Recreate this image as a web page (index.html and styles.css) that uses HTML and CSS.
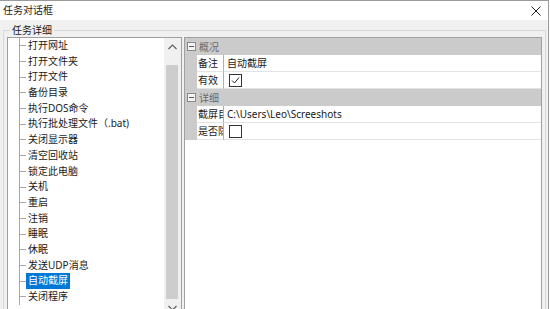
FILE: index.html
```html
<!DOCTYPE html>
<html lang="zh-CN">
<head>
  <meta charset="UTF-8">
  <title>任务对话框</title>
  <link rel="stylesheet" href="styles.css">
</head>
<body>
  <div class="window">
    <header class="titlebar">
      <span class="title">任务对话框</span>
      <svg class="close" width="10" height="10" viewBox="0 0 10 10">
        <path d="M0.5 0.5 L9.5 9.5 M9.5 0.5 L0.5 9.5" stroke="#222" stroke-width="1" fill="none"/>
      </svg>
    </header>

    <div class="client">
      <fieldset class="group">
        <legend>任务详细</legend>
        <div class="panes">
          <!-- Task type tree -->
          <div class="tree">
            <ul class="tree-list">
              <li><span>打开网址</span></li>
              <li><span>打开文件夹</span></li>
              <li><span>打开文件</span></li>
              <li><span>备份目录</span></li>
              <li><span>执行DOS命令</span></li>
              <li><span>执行批处理文件（.bat)</span></li>
              <li><span>关闭显示器</span></li>
              <li><span>清空回收站</span></li>
              <li><span>锁定此电脑</span></li>
              <li><span>关机</span></li>
              <li><span>重启</span></li>
              <li><span>注销</span></li>
              <li><span>睡眠</span></li>
              <li><span>休眠</span></li>
              <li><span>发送UDP消息</span></li>
              <li class="selected"><span>自动截屏</span></li>
              <li><span>关闭程序</span></li>
            </ul>
            <div class="vscroll">
              <div class="sb-btn">
                <svg width="9" height="6" viewBox="0 0 9 6"><path d="M0.5 5 L4.5 1 L8.5 5" stroke="#606060" stroke-width="1.2" fill="none"/></svg>
              </div>
              <div class="sb-thumb"></div>
              <div class="sb-btn">
                <svg width="9" height="6" viewBox="0 0 9 6"><path d="M0.5 1 L4.5 5 L8.5 1" stroke="#606060" stroke-width="1.2" fill="none"/></svg>
              </div>
            </div>
          </div>

          <!-- Property grid -->
          <div class="grid">
            <div class="cat-row">
              <span class="toggle"></span>
              <span class="cat-name">概况</span>
            </div>
            <div class="prop-row">
              <span class="margin"></span>
              <span class="prop-name">备注</span>
              <span class="prop-value">自动截屏</span>
            </div>
            <div class="prop-row">
              <span class="margin"></span>
              <span class="prop-name">有效</span>
              <span class="prop-value">
                <span class="check">
                  <svg width="11" height="11" viewBox="0 0 11 11"><path d="M2 5.5 L4.5 8 L9 2.5" stroke="#222" stroke-width="1" fill="none"/></svg>
                </span>
              </span>
            </div>
            <div class="cat-row">
              <span class="toggle"></span>
              <span class="cat-name">详细</span>
            </div>
            <div class="prop-row">
              <span class="margin"></span>
              <span class="prop-name">截屏目录</span>
              <span class="prop-value">C:\Users\Leo\Screeshots</span>
            </div>
            <div class="prop-row">
              <span class="margin"></span>
              <span class="prop-name">是否隐藏</span>
              <span class="prop-value"><span class="check"></span></span>
            </div>
          </div>
        </div>
      </fieldset>
    </div>
  </div>
</body>
</html>
```

FILE: styles.css
```css
/* Base */
html, body {
  margin: 0;
  padding: 0;
}
body {
  width: 550px;
  height: 309px;
  overflow: hidden;
  font-family: "Noto Sans", "Noto Sans CJK SC", sans-serif;
  font-size: 10px;
  color: #1a1a1a;
  background: #fff;
}
.window {
  width: 548px;
  height: 308px;
  border-top: 1px solid #9a9a9a;
  border-right: 1px solid #9a9a9a;
  display: flex;
  flex-direction: column;
  overflow: hidden;
}
/* Title bar */
.titlebar {
  height: 19px;
  flex: none;
  display: flex;
  align-items: center;
  justify-content: space-between;
  padding: 0 7px 0 3px;
  background: #fff;
}
.title {
  line-height: 19px;
}
/* Client area */
.client {
  flex: 1;
  background: #f0f0f0;
  padding: 3px 2px 0 3px;
}
.group {
  margin: 0;
  padding: 0 3px;
  border: 1px solid #d8d8d8;
  height: 400px;
}
.group legend {
  margin-left: 3px;
  padding: 0 2px;
  line-height: 14px;
}
.panes {
  display: flex;
  gap: 2px;
  height: 100%;
}
/* Tree */
.tree {
  width: 173px;
  flex: none;
  display: flex;
  border: 1px solid #a0a0a0;
  background: #fff;
}
.tree-list {
  flex: 1;
  list-style: none;
  margin: 0;
  padding: 0;
}
.tree-list li {
  height: 15.7px;
  line-height: 15.7px;
  padding-left: 18px;
  white-space: nowrap;
  background-image:
    linear-gradient(#a8a8a8, #a8a8a8),
    linear-gradient(#a8a8a8, #a8a8a8);
  background-size: 1px 100%, 6px 1px;
  background-position: 11px 0, 12px 50%;
  background-repeat: no-repeat;
}
.tree-list li span {
  padding: 0 2px;
  display: inline-block;
}
.tree-list li.selected span {
  background: #0078d7;
  color: #fff;
}
/* Scrollbar */
.vscroll {
  width: 17px;
  flex: none;
  background: #f0f0f0;
  display: flex;
  flex-direction: column;
}
.sb-btn {
  height: 17px;
  flex: none;
  display: flex;
  align-items: center;
  justify-content: center;
}
.sb-thumb {
  height: 234px;
  margin: 10px 3px 0 2px;
  background: #cdcdcd;
  flex: none;
}
/* Property grid */
.grid {
  flex: 1;
  border: 1px solid #a0a0a0;
  background: #fff;
}
.cat-row {
  height: 17px;
  display: flex;
  align-items: center;
  background: #cbcbcb;
}
.toggle {
  width: 7px;
  height: 7px;
  margin: 0 3px 0 2px;
  border: 1px solid #8a8a8a;
  background: #f4f4f4 linear-gradient(#555, #555) no-repeat center / 5px 1px;
}
.cat-name {
  color: #6a6a6a;
}
.prop-row {
  height: 17px;
  display: flex;
}
.margin {
  width: 12px;
  flex: none;
  background: #cbcbcb;
}
.prop-name,
.prop-value {
  border-bottom: 1px solid #e3e3e3;
  line-height: 16px;
  white-space: nowrap;
  overflow: hidden;
}
.prop-name {
  width: 25px;
  flex: none;
  padding-left: 1px;
  border-right: 1px solid #b0b0b0;
}
.prop-value {
  flex: 1;
  padding-left: 3px;
  display: flex;
  align-items: center;
}
.check {
  width: 11px;
  height: 11px;
  margin-left: 2px;
  border: 1px solid #333;
  background: #fff;
  display: flex;
}
```
